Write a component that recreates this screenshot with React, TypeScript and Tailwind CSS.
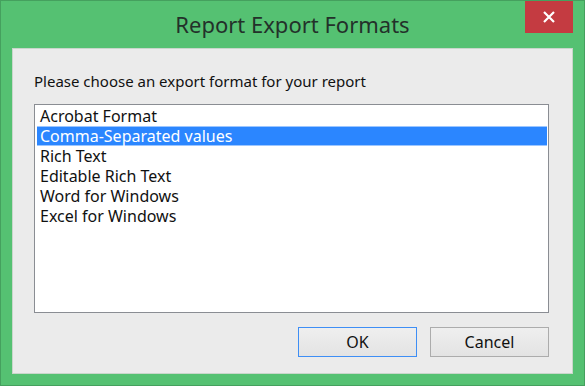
import React from "react";

const items = [
  "Acrobat Format",
  "Comma-Separated values",
  "Rich Text",
  "Editable Rich Text",
  "Word for Windows",
  "Excel for Windows",
];

export default function App() {
  return (
    <div
      className="w-[585px] h-[386px] bg-[#55c172] border border-[#45a05e] flex flex-col"
      style={{ fontFamily: '"Noto Sans", "Open Sans", sans-serif' }}
    >
      <div className="h-[47px] flex items-start relative">
        <div className="flex-1 text-center text-[22px] leading-none pt-[12px] text-[#23312a]">
          Report Export Formats
        </div>
        <div className="absolute right-[11px] top-0 w-[48px] h-[32px] bg-[#c43b41] flex items-center justify-center">
          <svg width="12" height="12" viewBox="0 0 12 12">
            <path d="M1 1 L11 11 M11 1 L1 11" stroke="white" strokeWidth="2.2" />
          </svg>
        </div>
      </div>
      <div className="mx-[11px] h-[326px] bg-[#ebebeb] border border-[#c9d6cb] flex flex-col pl-[21px] pr-[23px]">
        <div className="text-[15px] leading-none text-[#111] pt-[25px] h-[55px]">
          Please choose an export format for your report
        </div>
        <div className="h-[209px] bg-white border border-[#8a8d93] py-[1px] pl-[2px] pr-[1px]">
          {items.map((it, i) => (
            <div
              key={it}
              className={
                "h-[20px] text-[16px] pl-[3px] " +
                (i === 1
                  ? "bg-[#2b86ff] text-white border-y border-[#9cc6ff] leading-[18px]"
                  : "text-[#111] leading-[20px]")
              }
            >
              {it}
            </div>
          ))}
        </div>
        <div className="flex justify-end gap-[13px] mt-[14px]">
          <button className="w-[119px] h-[30px] border border-[#3e8ef5] bg-gradient-to-b from-[#efefef] to-[#e3e3e3] text-[16px] text-[#111]">
            OK
          </button>
          <button className="w-[119px] h-[30px] border border-[#acacac] bg-gradient-to-b from-[#efefef] to-[#e3e3e3] text-[16px] text-[#111]">
            Cancel
          </button>
        </div>
      </div>
    </div>
  );
}
